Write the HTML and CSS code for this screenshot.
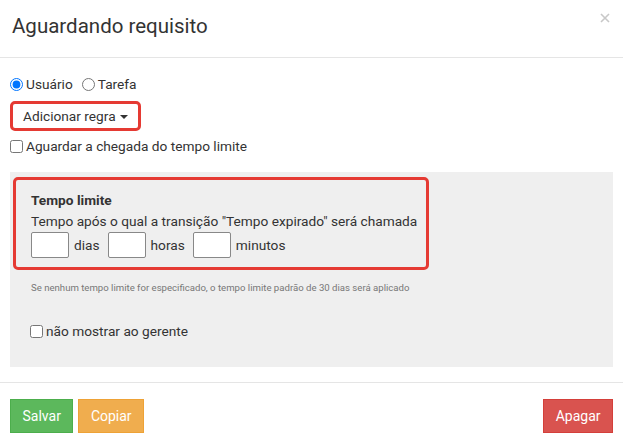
FILE: index.html
```html
<!DOCTYPE html>
<html lang="pt">
<head>
    <meta charset="UTF-8">
    <title>Aguardando requisito</title>
    <link rel="stylesheet" href="styles.css">
</head>
<body>
    <div class="modal">
        <div class="modal-header">
            <h4 class="modal-title">Aguardando requisito</h4>
            <svg class="close" width="10" height="10" viewBox="0 0 10 10">
                <path d="M1 1 L9 9 M9 1 L1 9" stroke="#c8c8c8" stroke-width="1.6" />
            </svg>
        </div>

        <div class="modal-body">
            <div class="radio-row">
                <label><input type="radio" name="tipo" checked> Usuário</label>
                <label><input type="radio" name="tipo"> Tarefa</label>
            </div>

            <div class="highlight rule-box">
                <span class="dropdown">Adicionar regra <span class="caret"></span></span>
            </div>

            <label class="check wait-check"><input type="checkbox"> Aguardar a chegada do tempo limite</label>

            <div class="panel">
                <div class="highlight timeout-box">
                    <div class="timeout-title">Tempo limite</div>
                    <div class="timeout-desc">Tempo após o qual a transição "Tempo expirado" será chamada</div>
                    <div class="time-inputs">
                        <input type="text"> <span>dias</span>
                        <input type="text"> <span>horas</span>
                        <input type="text"> <span>minutos</span>
                    </div>
                </div>
                <p class="help">Se nenhum tempo limite for especificado, o tempo limite padrão de 30 dias será aplicado</p>
                <label class="check"><input type="checkbox"> não mostrar ao gerente</label>
            </div>
        </div>

        <div class="modal-footer">
            <button class="btn btn-success">Salvar</button>
            <button class="btn btn-warning">Copiar</button>
            <button class="btn btn-danger push-right">Apagar</button>
        </div>
    </div>
</body>
</html>
```

FILE: styles.css
```css
body {
    margin: 0;
    background-color: #fff;
    font-family: Roboto, "Liberation Sans", sans-serif;
    font-size: 13.7px;
    color: #333;
}

.modal {
    width: 623px;
}

.modal-header {
    display: flex;
    justify-content: space-between;
    align-items: flex-start;
    padding: 11px 12px 16px 12px;
    border-bottom: 1px solid #e5e5e5;
}

.modal-title {
    margin: 0;
    font-size: 20.5px;
    font-weight: normal;
    line-height: 30px;
}

.close {
    margin: 2px 1px 0 0;
}

.modal-body {
    padding: 16px 10px 15px 10px;
}

.radio-row {
    display: flex;
    gap: 9px;
    height: 20px;
    align-items: center;
}

.radio-row label {
    display: flex;
    align-items: center;
}

input[type="radio"],
input[type="checkbox"] {
    margin: 0 3px 0 0;
    width: 13px;
    height: 13px;
}

.highlight {
    border: 3px solid #e53a33;
    border-radius: 5px;
}

.rule-box {
    display: inline-block;
    margin-top: 7px;
    padding: 3px 10px;
    line-height: 18px;
}

.caret {
    display: inline-block;
    width: 0;
    height: 0;
    margin-left: 1px;
    vertical-align: middle;
    border-top: 4px solid #333;
    border-left: 4px solid transparent;
    border-right: 4px solid transparent;
}

.check {
    display: flex;
    align-items: center;
    height: 20px;
}

.wait-check {
    margin-top: 5px;
}

.panel {
    background-color: #efefef;
    margin-top: 16px;
    padding: 5px 3px 26px 3px;
}

.timeout-box {
    display: inline-block;
    padding: 9px 9px 9px 15px;
}

.timeout-title {
    font-weight: bold;
    line-height: 22px;
}

.timeout-desc {
    white-space: nowrap;
    line-height: 20px;
}

.time-inputs {
    display: flex;
    align-items: center;
    gap: 5px;
    margin-top: 1px;
}

.time-inputs input {
    box-sizing: border-box;
    width: 38px;
    height: 26px;
    padding: 0;
    border: 1px solid #888;
    border-radius: 2px;
    background: #fff;
}

.time-inputs span {
    margin-right: 3px;
}

.help {
    margin: 12px 0 27px 18px;
    font-size: 9.6px;
    line-height: 12px;
    color: #777;
}

.panel .check {
    margin-left: 17px;
}

.modal-footer {
    display: flex;
    gap: 5px;
    padding: 16px 10px;
    border-top: 1px solid #e5e5e5;
}

.btn {
    font-family: Roboto, "Liberation Sans", sans-serif;
    font-size: 14px;
    color: #fff;
    height: 34px;
    padding: 0 11.5px;
    border: 1px solid transparent;
    border-radius: 0;
}

.btn-success {
    background-color: #5cb85c;
    border-color: #4cae4c;
}

.btn-warning {
    background-color: #f0ad4e;
    border-color: #eea236;
}

.btn-danger {
    background-color: #d9534f;
    border-color: #d43f3a;
}

.push-right {
    margin-left: auto;
}
```
